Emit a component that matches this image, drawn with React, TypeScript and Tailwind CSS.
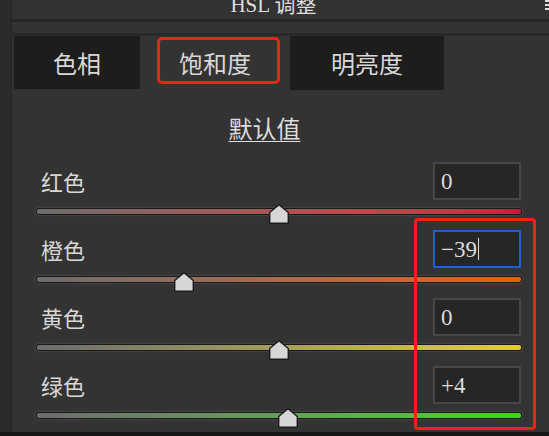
import React from "react";

const rows = [
  { label: "红色", value: "0", pos: 0, track: "from-[#6c6c6c] to-[#e00a3c]", focused: false },
  { label: "橙色", value: "−39", pos: -39, track: "from-[#6c6c6c] to-[#e36206]", focused: true },
  { label: "黄色", value: "0", pos: 0, track: "from-[#6c6c6c] to-[#e2d408]", focused: false },
  { label: "绿色", value: "+4", pos: 4, track: "from-[#6c6c6c] to-[#40d410]", focused: false },
];

function Thumb({ pos }: { pos: number }) {
  // track is 485px wide, range -100..100
  const left = 242.5 + (pos / 100) * 242.5 - 10;
  return (
    <svg
      className="absolute top-[-4px]"
      style={{ left }}
      width="20"
      height="20"
      viewBox="0 0 20 20"
    >
      <polygon
        points="10,0.8 19.3,8.5 19.3,19.3 0.7,19.3 0.7,8.5"
        fill="#d6d6d6"
        stroke="#1c1c1c"
        strokeWidth="1.4"
        strokeLinejoin="round"
      />
    </svg>
  );
}

function SliderRow({ row }: { row: (typeof rows)[number] }) {
  return (
    <div className="flex flex-col">
      <div className="flex h-[38px] items-center justify-between">
        <span className="pl-[5px] text-[22px] leading-none text-[#d8d8d8]">{row.label}</span>
        <div
          className={
            row.focused
              ? "mr-[1px] flex h-[38px] w-[88px] items-center border-2 border-[#1d60d2] bg-[#262626] pl-[6px]"
              : "mr-[1px] flex h-[38px] w-[88px] items-center border-2 border-[#474747] bg-[#262626] pl-[6px]"
          }
        >
          <span className="font-['Liberation_Serif',serif] text-[23px] leading-none text-[#dcdcdc]">
            {row.value}
          </span>
          {row.focused && <span className="ml-[1px] h-[22px] w-[1px] bg-[#dcdcdc]" />}
        </div>
      </div>
      <div className="relative mt-[8px] h-[7px] rounded-[3px] bg-[#1a1a1a] p-[1px] shadow-[0_0_2px_1px_#474747]">
        <div className={"h-full rounded-[2px] bg-linear-to-r " + row.track} />
        <Thumb pos={row.pos} />
      </div>
    </div>
  );
}

export default function App() {
  return (
    <div className="flex h-[436px] w-[549px] flex-col overflow-hidden bg-[#333333] font-['Noto_Sans_CJK_SC','Noto_Sans',sans-serif]">
      <div className="flex h-[432px]">
        <div className="w-[12px] border-r border-[#242424] bg-[#2b2b2b]" />
        <div className="flex flex-1 flex-col">
          {/* header */}
          <div className="relative flex h-[19px] justify-center overflow-hidden bg-[#323232] pr-[14px]">
            <span className="-mt-[6px] whitespace-pre font-['Liberation_Serif','Noto_Sans_CJK_SC',serif] text-[21px] leading-[22px] text-[#dedede]">
              HSL 调整
            </span>
            <div className="absolute right-0 top-0 flex flex-col gap-[2px]">
              <div className="h-[2px] w-[4px] bg-[#e0e0e0]" />
              <div className="h-[2px] w-[4px] bg-[#e0e0e0]" />
              <div className="h-[2px] w-[4px] bg-[#e0e0e0]" />
            </div>
          </div>
          <div className="h-[3px] bg-[#252525]" />
          <div className="h-[11px]" />
          <div className="h-[3px] bg-[#2a2a2a]" />

          {/* tabs */}
          <div className="flex h-[53px] px-[2px] text-[24px] text-[#d8d8d8]">
            <div className="flex w-[126px] items-center justify-center bg-[#1d1d1d]">色相</div>
            <div className="relative flex w-[150px] items-center justify-center">
              饱和度
              <div className="absolute left-[17px] top-[1px] h-[47px] w-[123px] rounded-[5px] border-[3px] border-[#f81e14]" />
            </div>
            <div className="flex h-[54px] w-[154px] items-center justify-center bg-[#1d1d1d]">明亮度</div>
            <div className="flex-1" />
          </div>

          {/* default */}
          <div className="mt-[27px] flex justify-center pr-[32px]">
            <span className="text-[24px] leading-none text-[#dcdcdc] underline underline-offset-[3px] decoration-1">
              默认值
            </span>
          </div>

          {/* sliders */}
          <div className="relative mt-[22px] flex flex-col gap-[15px] pl-[24px] pr-[27px]">
            {rows.map((row) => (
              <SliderRow key={row.label} row={row} />
            ))}
            <div className="absolute left-[402px] top-[56px] h-[212px] w-[122px] rounded-[4px] border-[3px] border-[#f81e14]" />
          </div>
        </div>
      </div>
      <div className="h-[4px] bg-[#161616]" />
    </div>
  );
}
